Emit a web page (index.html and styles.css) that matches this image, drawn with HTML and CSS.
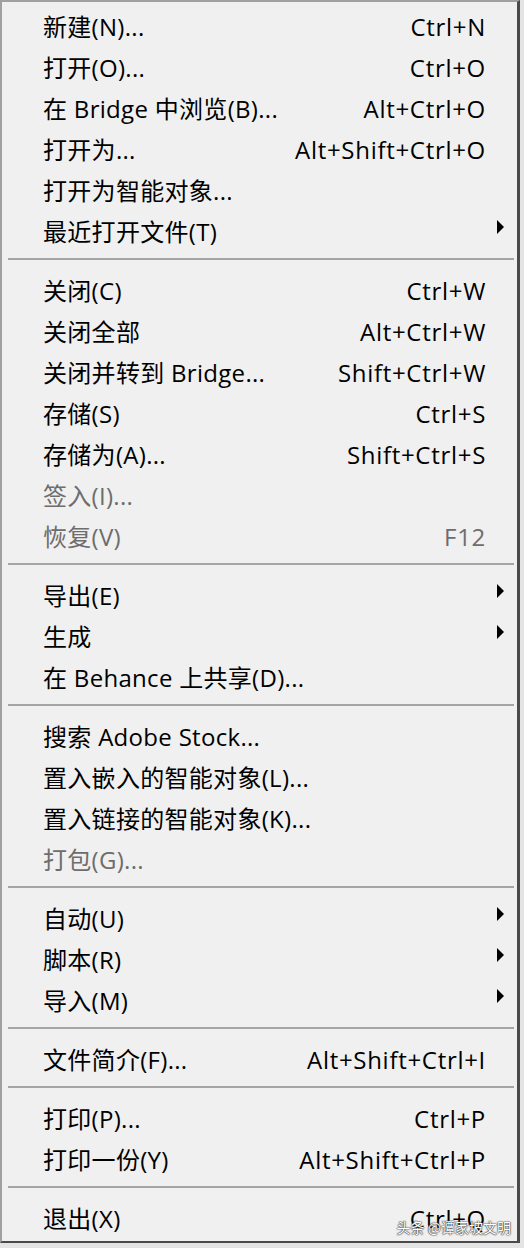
FILE: index.html
```html
<!DOCTYPE html>
<html lang="zh-CN">
<head>
<meta charset="utf-8">
<title>文件菜单</title>
<link rel="stylesheet" href="styles.css">
</head>
<body>
<div class="menu">
  <div class="item"><span class="label">新建(N)...</span><span class="key">Ctrl+N</span><span class="sub"></span></div>
  <div class="item"><span class="label">打开(O)...</span><span class="key">Ctrl+O</span><span class="sub"></span></div>
  <div class="item"><span class="label">在 Bridge 中浏览(B)...</span><span class="key">Alt+Ctrl+O</span><span class="sub"></span></div>
  <div class="item"><span class="label">打开为...</span><span class="key">Alt+Shift+Ctrl+O</span><span class="sub"></span></div>
  <div class="item"><span class="label">打开为智能对象...</span><span class="key"></span><span class="sub"></span></div>
  <div class="item"><span class="label">最近打开文件(T)</span><span class="key"></span><span class="sub"><i class="arrow"></i></span></div>
  <div class="sep"></div>
  <div class="item"><span class="label">关闭(C)</span><span class="key">Ctrl+W</span><span class="sub"></span></div>
  <div class="item"><span class="label">关闭全部</span><span class="key">Alt+Ctrl+W</span><span class="sub"></span></div>
  <div class="item"><span class="label">关闭并转到 Bridge...</span><span class="key">Shift+Ctrl+W</span><span class="sub"></span></div>
  <div class="item"><span class="label">存储(S)</span><span class="key">Ctrl+S</span><span class="sub"></span></div>
  <div class="item"><span class="label">存储为(A)...</span><span class="key">Shift+Ctrl+S</span><span class="sub"></span></div>
  <div class="item disabled"><span class="label">签入(I)...</span><span class="key"></span><span class="sub"></span></div>
  <div class="item disabled"><span class="label">恢复(V)</span><span class="key">F12</span><span class="sub"></span></div>
  <div class="sep"></div>
  <div class="item"><span class="label">导出(E)</span><span class="key"></span><span class="sub"><i class="arrow"></i></span></div>
  <div class="item"><span class="label">生成</span><span class="key"></span><span class="sub"><i class="arrow"></i></span></div>
  <div class="item"><span class="label">在 Behance 上共享(D)...</span><span class="key"></span><span class="sub"></span></div>
  <div class="sep"></div>
  <div class="item"><span class="label">搜索 Adobe Stock...</span><span class="key"></span><span class="sub"></span></div>
  <div class="item"><span class="label">置入嵌入的智能对象(L)...</span><span class="key"></span><span class="sub"></span></div>
  <div class="item"><span class="label">置入链接的智能对象(K)...</span><span class="key"></span><span class="sub"></span></div>
  <div class="item disabled"><span class="label">打包(G)...</span><span class="key"></span><span class="sub"></span></div>
  <div class="sep"></div>
  <div class="item"><span class="label">自动(U)</span><span class="key"></span><span class="sub"><i class="arrow"></i></span></div>
  <div class="item"><span class="label">脚本(R)</span><span class="key"></span><span class="sub"><i class="arrow"></i></span></div>
  <div class="item"><span class="label">导入(M)</span><span class="key"></span><span class="sub"><i class="arrow"></i></span></div>
  <div class="sep"></div>
  <div class="item"><span class="label">文件简介(F)...</span><span class="key">Alt+Shift+Ctrl+I</span><span class="sub"></span></div>
  <div class="sep"></div>
  <div class="item"><span class="label">打印(P)...</span><span class="key">Ctrl+P</span><span class="sub"></span></div>
  <div class="item"><span class="label">打印一份(Y)</span><span class="key">Alt+Shift+Ctrl+P</span><span class="sub"></span></div>
  <div class="sep"></div>
  <div class="item"><span class="label">退出(X)</span><span class="key">Ctrl+Q</span><span class="sub"></span></div>
  <div class="watermark">头条 @谭家坡文明</div>
</div>
</body>
</html>
```

FILE: styles.css
```css
html, body {
  margin: 0;
  padding: 0;
}
body {
  background: #e4e4e4;
  width: 524px;
  height: 1248px;
  overflow: hidden;
  font-family: "Open Sans", "Noto Sans CJK SC", sans-serif;
}
.menu {
  position: relative;
  box-sizing: border-box;
  width: 520px;
  background: #f0f0f0;
  border-top: 2px solid #a0a0a0;
  border-left: 2px solid #a0a0a0;
  border-right: 3px solid #4a4a4a;
  border-bottom: 2px solid #4a4a4a;
  padding: 4px 0 2px 0;
  color: #000;
}
.item {
  display: flex;
  align-items: center;
  height: 41px;
  padding-left: 41px;
  font-size: 24px;
  line-height: 41px;
  letter-spacing: 0.3px;
  white-space: nowrap;
}
.item.disabled {
  color: #6d6d6d;
}
.label {
  flex: 1;
}
.key {
  text-align: right;
  letter-spacing: 0.7px;
  margin-right: -1px;
}
.sub {
  width: 32px;
  height: 41px;
  position: relative;
  flex: none;
}
.arrow {
  position: absolute;
  left: 12px;
  top: 9px;
  width: 0;
  height: 0;
  border-left: 7px solid #000;
  border-top: 7px solid transparent;
  border-bottom: 7px solid transparent;
}
.sep {
  height: 18px;
  padding-top: 6px;
  box-sizing: border-box;
  margin: 0 3px 0 6px;
}
.sep::before {
  content: "";
  display: block;
  height: 2px;
  background: #a5a5a5;
}
.watermark {
  position: absolute;
  right: 6px;
  bottom: 5px;
  font-family: "Noto Sans CJK SC", sans-serif;
  font-size: 14px;
  line-height: 18px;
  color: #fff;
  text-shadow: 0 0 1px #333, 0 0 1px #333, 0 0 2px #555;
}
```
